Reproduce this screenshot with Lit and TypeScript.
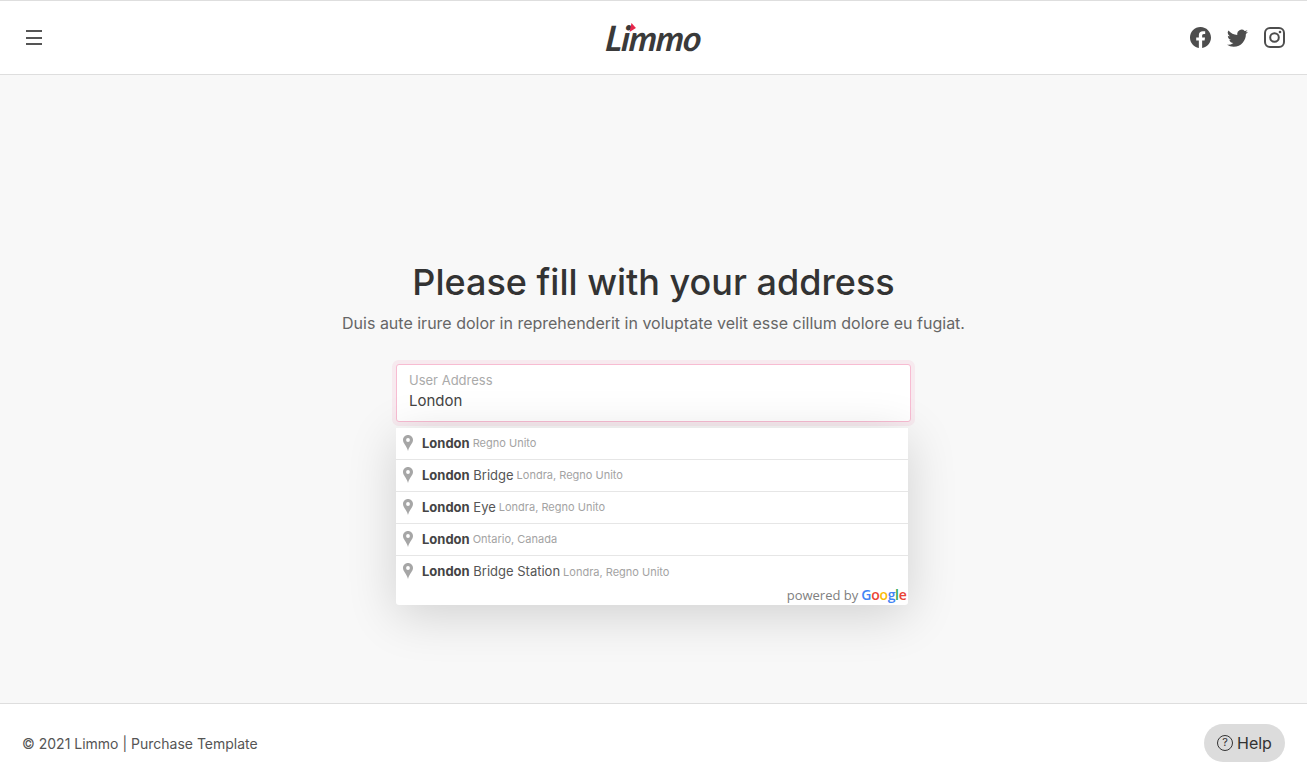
import { LitElement, html, css, svg } from "lit";
import { customElement } from "lit/decorators.js";

const pin = svg`<path fill-rule="evenodd" d="M5 0C2.2 0 0 2.2 0 5c0 3.4 3.6 5.5 5 11 1.400-5.500 5-7.600 5-11 0-2.800-2.200-5-5-5zm0 3.100a1.900 1.900 0 1 1 0 3.800 1.900 1.900 0 0 1 0-3.800z"/>`;

const rows = [
  { bold: "London", rest: "", sub: "Regno Unito" },
  { bold: "London", rest: "Bridge", sub: "Londra, Regno Unito" },
  { bold: "London", rest: "Eye", sub: "Londra, Regno Unito" },
  { bold: "London", rest: "", sub: "Ontario, Canada" },
  { bold: "London", rest: "Bridge Station", sub: "Londra, Regno Unito" },
];

@customElement("app-root")
export class AppRoot extends LitElement {
  static styles = css`
    :host {
      display: grid;
      grid-template-rows: 75px 1fr 78px;
      height: 100vh;
      min-height: 781px;
      font-family: Inter, "Liberation Sans", sans-serif;
      color: #333;
      background: #f8f8f8;
    }
    * { box-sizing: border-box; }
    .header {
      display: flex;
      align-items: center;
      justify-content: space-between;
      background: #fff;
      border-top: 1px solid #dedede;
      border-bottom: 1px solid #dedede;
      padding: 0 22px 0 26px;
      position: relative;
    }
    .burger { display: flex; flex-direction: column; gap: 4.500px; width: 16px; }
    .burger i { display: block; height: 2px; background: #555; }
    .logo {
      position: absolute;
      left: 606px;
      top: 14px;
      font-family: Lato, sans-serif;
      font-style: italic;
      font-weight: 700;
      font-size: 35px;
      line-height: 44px;
      letter-spacing: -0.8px;
      color: #3a3a3a;
      transform: skewX(-6deg);
    }
    .heart {
      position: absolute;
      left: 22px;
      top: 8px;
      width: 8px;
      height: 9px;
    }
    .social { display: flex; gap: 16px; }
    .social svg { width: 21px; height: 21px; display: block; fill: #4d4d4d; }
    .main {
      display: flex;
      flex-direction: column;
      align-items: center;
      padding-top: 186px;
    }
    h1 {
      margin: 0;
      font-size: 36px;
      line-height: 42px;
      font-weight: 500;
      color: #333;
    }
    .sub {
      margin: 8px 0 0;
      font-size: 16px;
      line-height: 24px;
      color: #666;
    }
    .field {
      position: relative;
      width: 515px;
      margin-top: 29px;
      margin-left: -1px;
    }
    .input {
      height: 58px;
      background: #fff;
      border: 1px solid #f7bcd2;
      border-radius: 3px;
      box-shadow: 0 0 0 4px rgba(243, 190, 210, 0.25);
      padding: 8px 12px 0 13px;
    }
    .label { font-size: 13px; line-height: 14px; color: #aaa; margin-left: -0.5px; }
    .value { font-size: 15px; line-height: 20px; margin-top: 4px; color: #444; margin-left: -0.5px; }
    .pac {
      position: absolute;
      left: 0;
      top: 64px;
      width: 512px;
      height: 177px;
      background: #fff;
      border-radius: 0 0 3px 3px;
      box-shadow: 0 10px 50px rgba(0, 0, 0, 0.16);
      display: flex;
      flex-direction: column;
    }
    .row {
      display: flex;
      align-items: center;
      height: 32px;
      padding: 0 0 2px 7px;
      font-size: 13px;
      color: #555;
      border-bottom: 1px solid #e6e6e6;
      white-space: pre;
    }
    .row:nth-child(5) { border-bottom: 0; }
    .pin { width: 10px; height: 16px; fill: #a6a6a6; margin-right: 9.500px; flex: none; }
    .row b { font-weight: 700; color: #444; }
    .row small { font-size: 11px; color: #a3a3a3; margin-left: 3px; padding-top: 1px; }
    .powered {
      position: absolute;
      right: 1px;
      bottom: 2px;
      display: flex;
      align-items: baseline;
      font-family: "Open Sans", sans-serif;
      font-size: 13px;
      line-height: 16px;
      color: #808080;
    }
    .google {
      font-family: "Open Sans", sans-serif;
      font-size: 14px;
      font-weight: 600;
      margin-left: 3px;
      letter-spacing: -0.3px;
    }
    .b { color: #4285f4; } .r { color: #ea4335; } .y { color: #fbbc05; } .g { color: #34a853; }
    .footer {
      display: flex;
      align-items: center;
      justify-content: space-between;
      background: #fff;
      border-top: 1px solid #dedede;
      padding: 1px 22px 0 22px;
      font-size: 14px;
      color: #555;
    }
    .help {
      display: flex;
      align-items: center;
      gap: 4px;
      width: 81px;
      height: 38px;
      border-radius: 19px;
      background: #dcdcdc;
      padding-left: 13px;
      font-size: 16px;
      color: #333;
      margin-top: -1px;
    }
    .q {
      width: 16px;
      height: 16px;
      border: 1.300px solid #333;
      border-radius: 50%;
      display: flex;
      align-items: center;
      justify-content: center;
      font-size: 11px;
      line-height: 1;
    }
  `;

  render() {
    return html`
      <header class="header">
        <div class="burger"><i></i><i></i><i></i></div>
        <div class="logo">Limmo
          <svg class="heart" viewBox="0 0 8 8" preserveAspectRatio="none"><path fill="#e8274b" d="M2 0l5 4.500L1 8z"/></svg>
        </div>
        <div class="social">
          <svg viewBox="0 0 16 16"><path d="M16 8.049c0-4.446-3.582-8.050-8-8.050C3.580 0-.002 3.603-.002 8.050c0 4.017 2.926 7.347 6.750 7.951v-5.625h-2.030V8.050H6.750V6.275c0-2.017 1.195-3.131 3.022-3.131.876 0 1.791.157 1.791.157v1.980h-1.009c-.993 0-1.303.621-1.303 1.258v1.510h2.218l-.354 2.326H9.250V16c3.824-.604 6.750-3.934 6.750-7.951z"/></svg>
          <svg viewBox="0 0 16 16"><path d="M5.026 15c6.038 0 9.341-5.003 9.341-9.334 0-.14 0-.282-.006-.422A6.685 6.685 0 0 0 16 3.542a6.658 6.658 0 0 1-1.889.518 3.301 3.301 0 0 0 1.447-1.817 6.533 6.533 0 0 1-2.087.793A3.286 3.286 0 0 0 7.875 6.030a9.325 9.325 0 0 1-6.767-3.429 3.289 3.289 0 0 0 1.018 4.382A3.323 3.323 0 0 1 .64 6.575v.045a3.288 3.288 0 0 0 2.632 3.218 3.203 3.203 0 0 1-.865.115 3.230 3.230 0 0 1-.614-.057 3.283 3.283 0 0 0 3.067 2.277A6.588 6.588 0 0 1 .78 13.580a6.320 6.320 0 0 1-.78-.045A9.344 9.344 0 0 0 5.026 15z"/></svg>
          <svg viewBox="0 0 21 21"><rect x="1" y="1" width="19" height="19" rx="5" fill="none" stroke="#4d4d4d" stroke-width="2"/><circle cx="10.500" cy="10.500" r="4.300" fill="none" stroke="#4d4d4d" stroke-width="2"/><circle cx="16" cy="5" r="1.300"/></svg>
        </div>
      </header>
      <main class="main">
        <h1>Please fill with your address</h1>
        <p class="sub">Duis aute irure dolor in reprehenderit in voluptate velit esse cillum dolore eu fugiat.</p>
        <div class="field">
          <div class="input">
            <div class="label">User Address</div>
            <div class="value">London</div>
          </div>
          <div class="pac">
            ${rows.map(
              (r) => html`<div class="row"><svg class="pin" viewBox="0 0 10 16">${pin}</svg><b>${r.bold}</b>${r.rest ? " " + r.rest : ""}<small>${r.sub}</small></div>`
            )}
            <div class="powered">powered by <span class="google"><span class="b">G</span><span class="r">o</span><span class="y">o</span><span class="b">g</span><span class="g">l</span><span class="r">e</span></span></div>
          </div>
        </div>
      </main>
      <footer class="footer">
        <span>© 2021 Limmo | Purchase Template</span>
        <div class="help"><span class="q">?</span>Help</div>
      </footer>
    `;
  }
}
